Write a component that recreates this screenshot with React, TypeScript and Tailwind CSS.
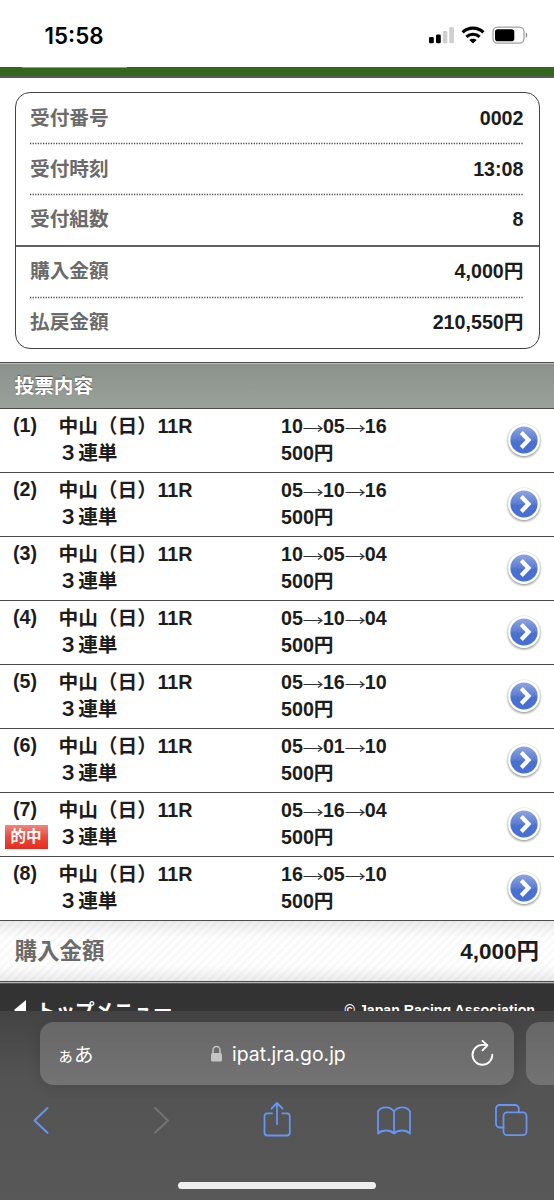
import React from "react";

const FONT = "font-['Liberation_Sans','Noto_Sans_CJK_JP',sans-serif]";

function StatusBar() {
  return (
    <div className="flex h-[67px] shrink-0 items-start justify-between bg-white pl-[44px] pr-[26px]">
      <div className="mt-[20px] w-[60px] font-['Inter','Liberation_Sans',sans-serif] text-[22.5px] font-semibold leading-[30px] text-black">
        <svg width="60" height="30" className="block overflow-visible">
          <text x="0.5" y="23.500" fontSize="22.5" textLength="59" lengthAdjust="spacingAndGlyphs" fill="#000">15:58</text>
        </svg>
      </div>
      <svg className="mt-[25px]" width="100" height="20" viewBox="428 25 100 20">
        <rect x="429" y="37" width="4.8" height="6.2" rx="1.3" fill="#000" />
        <rect x="436" y="34.5" width="4.8" height="8.7" rx="1.3" fill="#000" />
        <rect x="442.8" y="31" width="4.6" height="12.2" rx="1.3" fill="#cfcfcf" />
        <rect x="449.3" y="27" width="4.6" height="16.2" rx="1.3" fill="#cfcfcf" />
        <g fill="none" stroke="#000" strokeWidth="3.2">
          <path d="M462.6 32.4a15 15 0 0 1 20.8 0" />
          <path d="M466.4 36.9a9.6 9.6 0 0 1 13.2 0" />
        </g>
        <path d="M469.3 40.1a5.4 5.4 0 0 1 7.4 0L473 43.4z" fill="#000" />
        <rect x="493" y="27.2" width="31" height="16" rx="4.6" fill="none" stroke="#a0a0a0" strokeWidth="1.3" />
        <rect x="495" y="29.2" width="19.3" height="12" rx="2.8" fill="#000" />
        <path d="M525.8 32.6c2 .8 2 4.400 0 5.200z" fill="#888" />
      </svg>
    </div>
  );
}

function SummaryRow({ label, value, line }: { label: string; value: string; line?: string }) {
  return (
    <div className="flex h-[51.200px] shrink-0 flex-col">
      <div
        className={`flex flex-1 items-center justify-between pl-[14.500px] pr-[15px] text-[19.700px] font-bold ${
          line === "dotted" ? "pt-[2px]" : "pb-[0.500px]"
        }`}
      >
        <span className="text-[#6b6b6b]">{label}</span>
        <span className="text-[#1c1c1c]">{value}</span>
      </div>
      {line === "dotted" && (
        <svg className="ml-[14.500px] mr-[15px] block h-[2px] w-[495px] shrink-0 overflow-visible">
          <line x1="0" y1="1.500" x2="494" y2="1.500" stroke="#4c4c4c" strokeWidth="1.4" strokeDasharray="1.25 1.35" />
        </svg>
      )}
      {line === "solid" && <div className="h-[1.400px] shrink-0 bg-[#606060]" />}
    </div>
  );
}

function Summary() {
  return (
    <div className="mx-[14.5px] mt-[14px] h-[257px] shrink-0 rounded-[15px] border-[1.400px] border-[#444]">
      <SummaryRow label="受付番号" value="0002" line="dotted" />
      <SummaryRow label="受付時刻" value="13:08" line="dotted" />
      <SummaryRow label="受付組数" value="8" line="solid" />
      <SummaryRow label="購入金額" value="4,000円" line="dotted" />
      <SummaryRow label="払戻金額" value="210,550円" />
    </div>
  );
}

function Arrow() {
  return (
    <svg className="inline-block h-[12px] w-[20px]" viewBox="0 0 20 12">
      <path d="M0.500 7.500h18M15 4.500l4 3l-4 3" fill="none" stroke="#333" strokeWidth="1.200" />
    </svg>
  );
}

function NextButton() {
  return (
    <svg className="block" width="38" height="40" viewBox="0 0 38 40">
      <defs>
        <linearGradient id="blue" x1="0" y1="0" x2="0" y2="1">
          <stop offset="0" stopColor="#8fa6df" />
          <stop offset="0.480" stopColor="#5d7fd2" />
          <stop offset="0.560" stopColor="#4a70cf" />
          <stop offset="1" stopColor="#4771d8" />
        </linearGradient>
        <filter id="soft" x="-20%" y="-20%" width="140%" height="150%">
          <feGaussianBlur stdDeviation="1.200" />
        </filter>
      </defs>
      <circle cx="19" cy="20" r="16.300" fill="#777" opacity="0.800" filter="url(#soft)" />
      <circle cx="19" cy="19" r="16" fill="#fff" />
      <circle cx="19" cy="19" r="13.600" fill="url(#blue)" />
      <path d="M16.300 11.500l7.200 7.500l-7.200 7.500" fill="none" stroke="#fff" strokeWidth="4.200" />
    </svg>
  );
}

const bets = [
  ["10", "05", "16"],
  ["05", "10", "16"],
  ["10", "05", "04"],
  ["05", "10", "04"],
  ["05", "16", "10"],
  ["05", "01", "10"],
  ["05", "16", "04"],
  ["16", "05", "10"],
];

function BetRow({ index, picks, hit }: { index: number; picks: string[]; hit: boolean }) {
  return (
    <div className="flex h-[64px] shrink-0 border-b-[1.400px] border-[#4a4a4a] bg-white text-[19.700px] font-bold leading-[27px] text-[#1c1c1c]">
      <div className="flex w-[58.500px] flex-col pl-[4.500px] pt-[3px]">
        <span className="pl-[8.500px]">({index})</span>
        {hit && (
          <div className="mt-[2px] flex h-[24px] w-[43px] shrink-0 items-center justify-center bg-linear-to-b from-[#ee8580] via-[#e7483e] via-50% to-[#e92a1b] text-[15.500px] leading-[22px] text-white">
            的中
          </div>
        )}
      </div>
      <div className="flex w-[222.500px] flex-col whitespace-nowrap pt-[4px]">
        <span>中山（日）<span className="ml-[0.500px]">11R</span></span>
        <span>３連単</span>
      </div>
      <div className="flex w-[224px] flex-col whitespace-nowrap pt-[4px]">
        <span className="flex items-center">
          {picks[0]}
          <Arrow />
          {picks[1]}
          <Arrow />
          {picks[2]}
        </span>
        <span>500円</span>
      </div>
      <div className="pt-[12px]">
        <NextButton />
      </div>
    </div>
  );
}

function Total() {
  return (
    <div className="flex h-[60px] shrink-0 items-center justify-between bg-[linear-gradient(to_bottom,rgba(0,0,0,.08),transparent_28%,transparent_75%,rgba(0,0,0,.08)),repeating-linear-gradient(135deg,#ffffff_0px,#ffffff_2px,#f8f8f8_3.500px,#f8f8f8_4.500px,#ffffff_6px)] pl-[14.500px] pr-[15px] pt-[2px] text-[22.500px] font-bold">
      <span className="text-[#6b6b6b]">購入金額</span>
      <span className="text-[#1c1c1c]">4,000円</span>
    </div>
  );
}

function Footer() {
  return (
    <div className="flex h-[27px] shrink-0 items-start justify-between overflow-hidden bg-[#333] pl-[14px] pr-[19px] font-bold text-white">
      <div className="flex items-start">
        <svg className="mt-[16px]" width="12" height="20" viewBox="0 0 12 20">
          <path d="M12 0v20L0 10z" fill="#fff" />
        </svg>
        <span className="ml-[10px] mt-[13px] whitespace-nowrap text-[19.500px] leading-[28px]">トップメニュー</span>
      </div>
      <span className="mt-[17px] text-[14.200px] leading-[18px]">© Japan Racing Association</span>
    </div>
  );
}

function Safari() {
  return (
    <div className="flex h-[189px] shrink-0 flex-col overflow-hidden bg-linear-to-b from-[#434343] via-[#535353] via-35% to-[#585858]">
      <div className="flex shrink-0 gap-[12px] pl-[40px] pt-[11px]">
        <div className="flex h-[63px] w-[474px] shrink-0 items-center rounded-[14px] bg-linear-to-b from-[#676767] to-[#737373] pl-[17px] pr-[20px] text-white shadow-[0_2px_14px_rgba(0,0,0,.12)]">
          <div className="flex w-[153px] items-baseline font-['Noto_Sans_CJK_JP',sans-serif]">
            <span className="text-[17px]">ぁ</span>
            <span className="text-[19.500px]">あ</span>
          </div>
          <svg width="13" height="18" viewBox="0 0 13 18">
            <rect x="1" y="8" width="11" height="8.500" rx="1.500" fill="#c5c5c7" />
            <path d="M3 8V5a3.500 3.500 0 0 1 7 0v3" fill="none" stroke="#c5c5c7" strokeWidth="1.500" />
          </svg>
          <span className="ml-[9px] pt-[1px] font-['Inter',sans-serif] text-[19.400px] leading-[24px]">ipat.jra.go.jp</span>
          <svg className="ml-auto" width="24" height="28" viewBox="0 0 24 28">
            <path d="M22.300 14.800a9.900 9.900 0 1 1-9.900-9.900h4.500" fill="none" stroke="#fff" strokeWidth="1.900" strokeLinecap="round" />
            <path d="M12.500 0.900l4.800 4.600l-4.800 4.800" fill="none" stroke="#fff" strokeWidth="1.900" strokeLinecap="round" strokeLinejoin="round" />
          </svg>
        </div>
        <div className="h-[63px] w-[60px] shrink-0 rounded-[14px] bg-linear-to-b from-[#676767] to-[#737373]" />
      </div>
      <svg className="mt-[15px] block h-[46px] w-full shrink-0" viewBox="0 1100 554 46" fill="none" stroke="#6695f3" strokeWidth="1.800" strokeLinecap="round" strokeLinejoin="round">
        <path d="M47.500 1108l-13 12.500l13 12.300" strokeWidth="2" />
        <path d="M155 1108l13 12.500l-13 12.300" stroke="#747474" strokeWidth="2" />
        <path d="M272 1113.300h-4.500a3 3 0 0 0-3 3v16.200a3 3 0 0 0 3 3h19.300a3 3 0 0 0 3-3v-16.200a3 3 0 0 0-3-3h-4.500M277 1124v-20.300M271.500 1108.500l5.500-5.500l5.500 5.500" />
        <path d="M394 1111.500c-4-5.500-13-5.500-16 0v22c4-4 12-4 16 0c4-4 12-4 16 0v-22c-3-5.500-12-5.500-16 0v22" />
        <rect x="503.500" y="1112.400" width="23" height="22.700" rx="3.500" />
        <path d="M503.500 1127.500h-4a3.500 3.500 0 0 1-3.500-3.500v-15.500a3.500 3.500 0 0 1 3.500-3.500h15.800a3.500 3.500 0 0 1 3.500 3.500v3.900" />
      </svg>
      <div className="mx-auto mt-[36px] h-[7px] w-[198px] shrink-0 rounded-full bg-[#efeeee]" />
    </div>
  );
}

export default function App() {
  return (
    <div className={`flex h-[1200px] w-[554px] flex-col overflow-hidden bg-white ${FONT}`}>
      <StatusBar />
      <div className="h-[11px] shrink-0 border-b-2 border-[#595959] bg-[#33681c]">
        <div className="ml-[22px] h-[1px] w-[105px] bg-[#86a878]" />
      </div>
      <Summary />
      <div className="mt-[13px] flex h-[47px] shrink-0 items-center border-b-[1.400px] border-t-[1.400px] border-[#4a4d4a] bg-linear-to-b from-[#8b928c] to-[#9aa19b] pl-[14.500px] pt-[2px] text-[19.700px] font-bold text-white shadow-[inset_0_1px_0_#b9bfba] [text-shadow:0_-1px_1px_#555]">
        投票内容
      </div>
      {bets.map((picks, i) => (
        <BetRow key={i} index={i + 1} picks={picks} hit={i === 6} />
      ))}
      <Total />
      <div className="h-[3px] shrink-0 border-b border-t border-b-[#555] border-t-[#4a4a4a] bg-[#bbb]" />
      <Footer />
      <Safari />
    </div>
  );
}
